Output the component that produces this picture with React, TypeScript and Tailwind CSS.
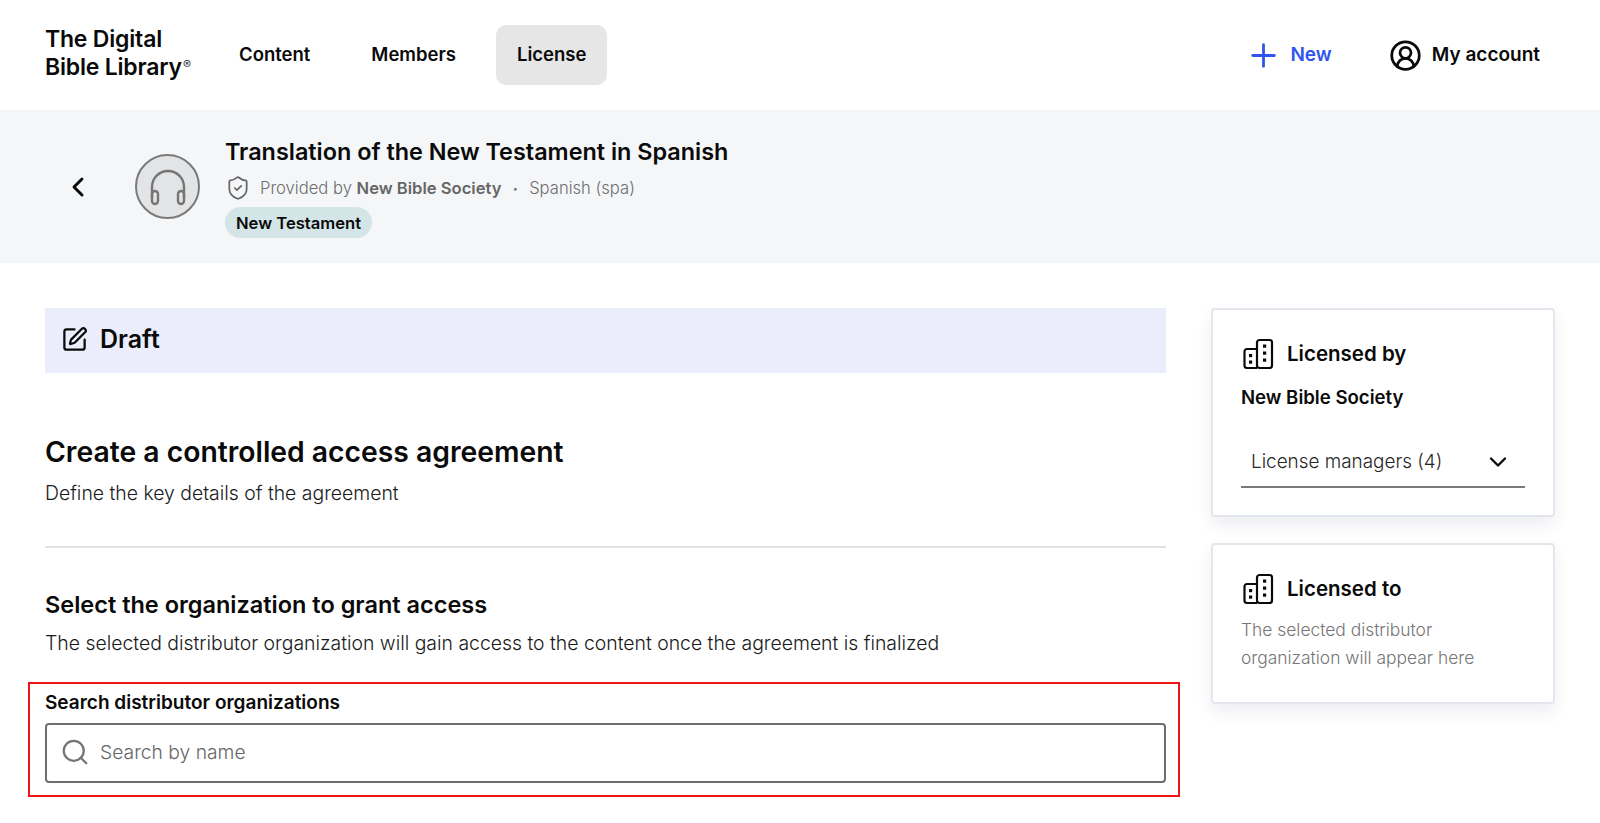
import React from 'react';
import { Plus, ChevronLeft, ChevronDown, Search, ShieldCheck, SquarePen, CircleUserRound } from 'lucide-react';

const font = "font-['Inter','Open_Sans',sans-serif]";

const BuildingsIcon = () => (
    <svg width="32" height="32" viewBox="0 0 32 32" fill="none" stroke="#0a0a0a" strokeWidth="2.2" strokeLinejoin="round" className="ml-[1px] shrink-0">
        <rect x="15" y="2" width="15" height="28" rx="2.5" />
        <path d="M15 11H5a2.5 2.5 0 0 0-2.5 2.5V27.5A2.5 2.5 0 0 0 5 30h10" />
        <g fill="#0a0a0a" stroke="none">
            <rect x="21" y="6.5" width="3.2" height="3.2" />
            <rect x="21" y="13.5" width="3.2" height="3.2" />
            <rect x="21" y="20.5" width="3.2" height="3.2" />
            <rect x="7" y="16" width="3.2" height="3.2" />
            <rect x="7" y="22.5" width="3.2" height="3.2" />
        </g>
    </svg>
);

const HeadphonesIcon = () => (
    <svg width="40" height="40" viewBox="0 0 40 40" fill="none" stroke="#757575" strokeWidth="2.4" strokeLinecap="round">
        <path d="M4 30V20a16 16 0 0 1 32 0v10" />
        <rect x="4" y="24" width="6" height="13" rx="3" />
        <rect x="30" y="24" width="6" height="13" rx="3" />
    </svg>
);

const NavItem = ({ label, active }: { label: string; active?: boolean }) => (
    <a className={`flex h-[60px] items-center rounded-[10px] px-[21px] text-[18.5px] font-semibold text-[#0a0a0a] ${active ? 'bg-[#e6e6e6]' : ''}`}>
        {label}
    </a>
);

const Card = ({ title, children }: { title: string; children: React.ReactNode }) => (
    <div className="rounded-[4px] border-2 border-[#e4e6ee] bg-white px-[28px] shadow-[0_8px_16px_rgba(30,40,80,0.08)]">
        <div className="mt-[28px] flex items-center gap-[13px]">
            <BuildingsIcon />
            <span className="text-[20.5px] font-semibold text-[#0a0a0a]">{title}</span>
        </div>
        {children}
    </div>
);

export default function App() {
    return (
        <div className={`min-h-[823px] bg-white ${font}`}>
            <header className="flex h-[110px] items-center pl-[45px] pr-[60px]">
                <div className="mb-[4px] w-[152px] whitespace-nowrap text-[23px] font-semibold leading-[28px] tracking-[-0.2px] text-[#0a0a0a]">
                    The Digital
                    <br />
                    Bible Library<sup className="ml-[1px] text-[12px] font-light">®</sup>
                </div>
                <nav className="ml-[21px] flex items-center gap-[19px]">
                    <NavItem label="Content" />
                    <NavItem label="Members" />
                    <NavItem label="License" active />
                </nav>
                <div className="ml-auto flex items-center gap-[8px] text-[19px] font-semibold text-[#2f55ee]">
                    <Plus size={37} strokeWidth={1.8} />
                    <span>New</span>
                </div>
                <div className="ml-[57px] flex items-center gap-[10px] text-[19px] font-semibold text-[#0a0a0a]">
                    <CircleUserRound size={33} strokeWidth={2} />
                    <span>My account</span>
                </div>
            </header>

            <section className="flex h-[153px] items-center bg-[#f5f6f8] pl-[62px]">
                <ChevronLeft size={32} strokeWidth={2.2} className="text-[#0a0a0a]" />
                <div className="ml-[41px] flex h-[65px] w-[65px] items-center justify-center rounded-full border-2 border-[#7a7a7a] bg-[#e3e4e6]">
                    <HeadphonesIcon />
                </div>
                <div className="ml-[25px] flex flex-col">
                    <h1 className="mt-[1px] text-[23.4px] font-semibold leading-[32px] text-[#0a0a0a]">Translation of the New Testament in Spanish</h1>
                    <div className="mt-[7px] flex items-center text-[16.6px] leading-[24px] font-light text-[#6e6e6e]">
                        <ShieldCheck size={26} strokeWidth={1.6} className="mr-[9px] text-[#666666]" />
                        <span>Provided by <b className="font-semibold text-[#666666]">New Bible Society</b></span>
                        <span className="mx-[11px] text-[10px]">•</span>
                        <span>Spanish (spa)</span>
                    </div>
                    <span className="mt-[6px] self-start rounded-full bg-[#d3e5e7] px-[11px] py-[3.5px] text-[16.6px] font-semibold leading-[24px] text-[#0a0a0a]">
                        New Testament
                    </span>
                </div>
            </section>

            <main className="flex gap-[45px] pl-[45px] pt-[45px]">
                <div className="w-[1121px]">
                    <div className="flex h-[65px] items-center gap-[12px] bg-[#ecedfc] pb-[2px] pl-[16px]">
                        <SquarePen size={27} strokeWidth={2} className="text-[#0a0a0a]" />
                        <span className="text-[25px] font-semibold text-[#0a0a0a]">Draft</span>
                    </div>
                    <h2 className="mt-[59px] text-[28.3px] font-semibold leading-[40px] text-[#0a0a0a]">Create a controlled access agreement</h2>
                    <p className="mt-[8px] text-[19.4px] font-light leading-[26px] text-[#1a1a1a]">Define the key details of the agreement</p>
                    <div className="mt-[40px] h-[2px] bg-[#e2e2e2]" />
                    <h3 className="mt-[41px] text-[23.5px] font-semibold leading-[32px] text-[#0a0a0a]">Select the organization to grant access</h3>
                    <p className="mt-[9px] text-[19.4px] font-light leading-[26px] text-[#1a1a1a]">
                        The selected distributor organization will gain access to the content once the agreement is finalized
                    </p>
                    <div className="-ml-[17px] -mr-[14px] mt-[26px] h-[115px] border-2 border-[#f01414] pl-[15px] pr-[12px] pt-[7px]">
                        <label className="block text-[19px] font-semibold leading-[24px] text-[#0a0a0a]">Search distributor organizations</label>
                        <div className="mt-[8px] flex h-[60px] items-center gap-[10px] rounded-[4px] border-2 border-[#6e6e6e] bg-white pb-[2px] pl-[13px]">
                            <Search size={30} strokeWidth={1.8} className="text-[#757575]" />
                            <span className="text-[19.3px] font-light text-[#666666]">Search by name</span>
                        </div>
                    </div>
                </div>

                <aside className="flex w-[344px] flex-col gap-[26px]">
                    <Card title="Licensed by">
                        <div className="mt-[14px] text-[18.6px] font-semibold leading-[26px] text-[#0a0a0a]">New Bible Society</div>
                        <div className="mb-[27px] mt-[28px] flex h-[50px] items-center justify-between border-b-2 border-[#7a7a7a] pl-[10px] pr-[13px] text-[18.9px] font-light text-[#262626]">
                            <span>License managers (4)</span>
                            <ChevronDown size={28} strokeWidth={2} className="text-[#0a0a0a]" />
                        </div>
                    </Card>
                    <Card title="Licensed to">
                        <p className="mb-[30px] mt-[11px] text-[17.4px] font-light leading-[28px] text-[#757575]">
                            The selected distributor
                            <br />
                            organization will appear here
                        </p>
                    </Card>
                </aside>
            </main>
        </div>
    );
}
